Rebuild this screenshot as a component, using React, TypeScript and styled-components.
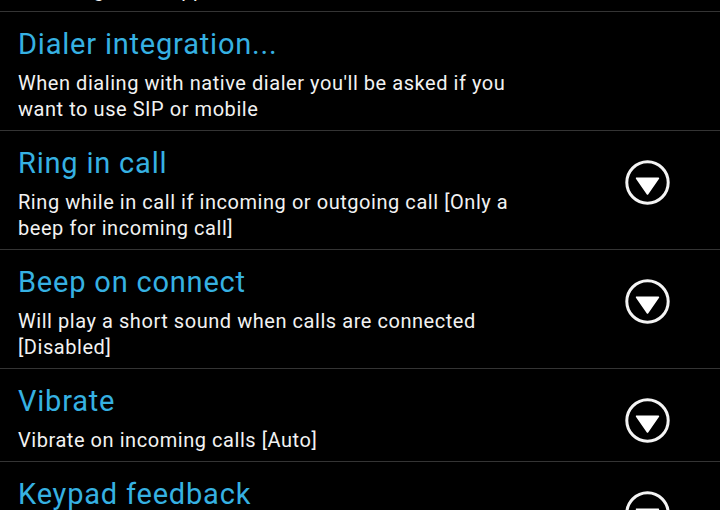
import React from "react";
import styled, { createGlobalStyle } from "styled-components";

const Global = createGlobalStyle`
  html, body { margin: 0; padding: 0; background: #000; }
  body { font-family: Roboto, "Noto Sans", "Liberation Sans", sans-serif; }
  #root { width: 720px; height: 510px; overflow: hidden; background: #000; }
`;

const Screen = styled.div`
  width: 720px;
  height: 510px;
  overflow: hidden;
  background: #000;
`;

const List = styled.div`
  display: flex;
  flex-direction: column;
  margin-top: -81px;
`;

const Row = styled.div`
  display: flex;
  align-items: flex-start;
  border-bottom: 1.5px solid #343434;
  padding: 15px 0 8px 0;
`;

const TextCol = styled.div`
  padding-left: 18px;
  width: 512px;
  display: flex;
  flex-direction: column;
`;

const Title = styled.div`
  color: #36b1e2;
  font-size: 29px;
  letter-spacing: 0.8px;
  line-height: 34px;
  white-space: nowrap;
`;

const Summary = styled.div`
  color: #f2f2f2;
  font-size: 20px;
  letter-spacing: 0.55px;
  line-height: 26px;
  margin-top: 9px;
`;

const Widget = styled.div`
  margin-left: auto;
  margin-right: 50px;
  margin-top: 14px;
  width: 45px;
  height: 45px;
  flex: none;
  display: flex;
`;

const DropIcon = () => (
  <svg width="45" height="45" viewBox="0 0 45 45">
    <circle cx="22.5" cy="22.5" r="20.7" fill="none" stroke="#f4f4f4" strokeWidth="3" />
    <path
      d="M11.6 18.2 L33.4 18.2 L22.5 34 Z"
      fill="#ffffff"
      stroke="#ffffff"
      strokeWidth="1.6"
      strokeLinejoin="round"
    />
  </svg>
);

type Item = { title: string; summary: string; dropdown: boolean };

const items: Item[] = [
  { title: "Integrate with Android", summary: "Will integrate in app", dropdown: false },
  {
    title: "Dialer integration...",
    summary: "When dialing with native dialer you'll be asked if you want to use SIP or mobile",
    dropdown: false,
  },
  {
    title: "Ring in call",
    summary: "Ring while in call if incoming or outgoing call [Only a beep for incoming call]",
    dropdown: true,
  },
  {
    title: "Beep on connect",
    summary: "Will play a short sound when calls are connected [Disabled]",
    dropdown: true,
  },
  { title: "Vibrate", summary: "Vibrate on incoming calls [Auto]", dropdown: true },
  { title: "Keypad feedback", summary: "Sound and vibration on key press", dropdown: true },
];

export default function App() {
  return (
    <>
      <Global />
      <Screen>
        <List>
          {items.map((it) => (
            <Row key={it.title}>
              <TextCol>
                <Title>{it.title}</Title>
                <Summary>{it.summary}</Summary>
              </TextCol>
              {it.dropdown && (
                <Widget>
                  <DropIcon />
                </Widget>
              )}
            </Row>
          ))}
        </List>
      </Screen>
    </>
  );
}
